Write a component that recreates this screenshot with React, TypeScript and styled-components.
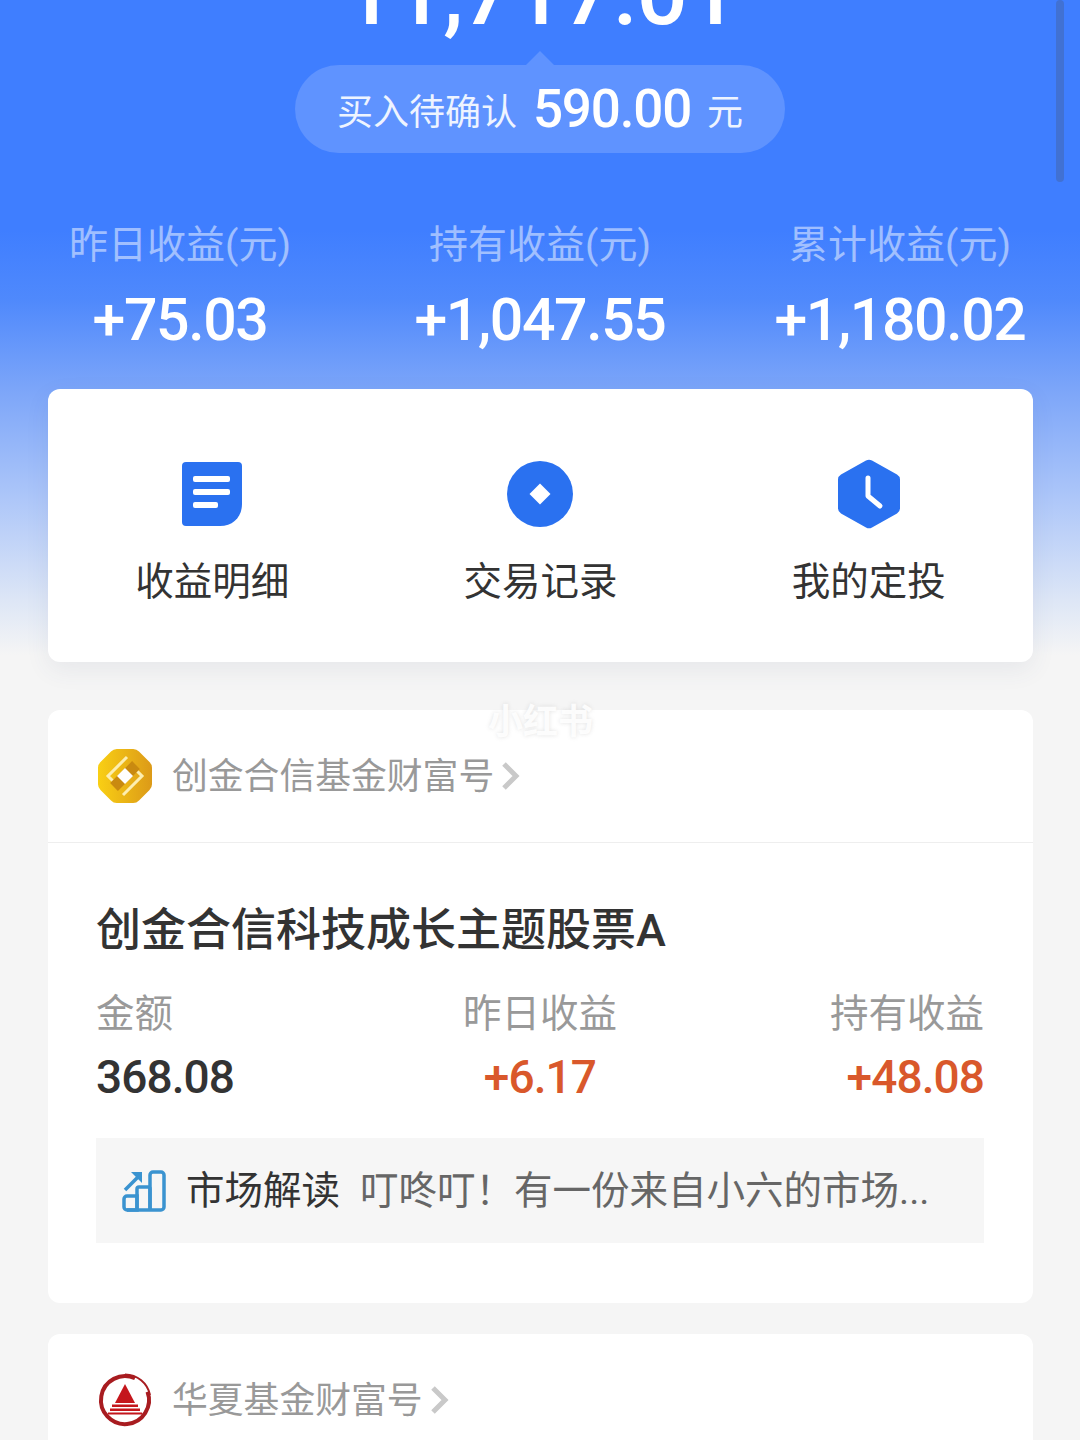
import React from "react";
import styled, { createGlobalStyle } from "styled-components";

const GlobalStyle = createGlobalStyle`
  html, body {
    margin: 0;
    padding: 0;
    background: #f5f5f5;
  }
`;

const cjk = `Roboto, "Noto Sans CJK SC", sans-serif`;

const Page = styled.div`
  position: relative;
  width: 1080px;
  height: 1440px;
  overflow: hidden;
  font-family: ${cjk};
  background: linear-gradient(
    #3f7eff 0,
    #3f7eff 230px,
    #4f89fc 300px,
    #7aa4f9 385px,
    #aec7f9 500px,
    #dde6f6 600px,
    #f5f5f5 655px
  );
`;

const Hero = styled.header`
  display: flex;
  flex-direction: column;
  align-items: center;
`;

const BigAmount = styled.div`
  margin-top: -56px;
  font-size: 90px;
  line-height: 100px;
  font-weight: 500;
  letter-spacing: -1px;
  color: #fff;
`;

const PendingBubble = styled.div`
  position: relative;
  display: flex;
  align-items: center;
  justify-content: center;
  gap: 16px;
  box-sizing: border-box;
  width: 490px;
  height: 88px;
  margin-top: 21px;
  border-radius: 44px;
  background: #5f93ff;
  color: #eef4ff;
  font-size: 36px;

  &::before {
    content: "";
    position: absolute;
    top: -14px;
    left: 231px;
    border-left: 14px solid transparent;
    border-right: 14px solid transparent;
    border-bottom: 14px solid #5f93ff;
  }
`;

const PendingAmount = styled.span`
  font-size: 53px;
  font-weight: 500;
  letter-spacing: -1.2px;
  color: #fff;
`;

const StatsRow = styled.div`
  display: grid;
  grid-template-columns: repeat(3, 360px);
  width: 100%;
  margin-top: 68px;
  text-align: center;
`;

const StatLabel = styled.div`
  font-size: 39px;
  line-height: 48px;
  color: rgba(255, 255, 255, 0.5);
`;

const StatValue = styled.div`
  margin-top: 18px;
  font-size: 59px;
  line-height: 66px;
  font-weight: 500;
  letter-spacing: -1.4px;
  color: #fff;
`;

const Card = styled.section`
  margin: 0 47px 0 48px;
  border-radius: 12px;
  background: #fff;
`;

const ActionCard = styled(Card)`
  display: grid;
  grid-template-columns: repeat(3, 1fr);
  height: 273px;
  margin-top: 36px;
  box-shadow: 0 8px 24px rgba(60, 80, 120, 0.08);
`;

const Action = styled.div`
  display: flex;
  flex-direction: column;
  align-items: center;
  padding-top: 70px;
`;

const ActionIcon = styled.div`
  display: flex;
  align-items: center;
  justify-content: center;
  height: 70px;
`;

const ActionLabel = styled.div`
  margin-top: 29px;
  font-size: 38.5px;
  line-height: 48px;
  color: #333;
`;

const FundCard = styled(Card)`
  height: 593px;
  margin-top: 48px;
`;

const OwnerRow = styled.div<{ $divided?: boolean }>`
  display: flex;
  align-items: center;
  gap: 18px;
  height: 132px;
  padding: 0 48px;
  border-bottom: ${(p) => (p.$divided ? "1px solid #eeeeee" : "none")};
`;

const OwnerName = styled.div`
  display: flex;
  align-items: center;
  gap: 7px;
  padding-bottom: 6px;
  font-size: 35.8px;
  color: #999;
`;

const ChevronGlyph = styled.svg`
  margin-top: 6px;
`;

const FundBody = styled.div`
  padding: 0 49px 0 48px;
`;

const FundTitle = styled.h2`
  margin: 60px 0 0;
  font-size: 45px;
  line-height: 56px;
  font-weight: 500;
  color: #333;
`;

const Columns = styled.div`
  display: grid;
  grid-template-columns: repeat(3, 1fr);
  margin-top: 31px;
`;

const Column = styled.div<{ $align: string }>`
  text-align: ${(p) => p.$align};
`;

const ColumnLabel = styled.div`
  font-size: 38.5px;
  line-height: 48px;
  color: #999;
`;

const ColumnValue = styled.div<{ $up?: boolean }>`
  margin-top: 13px;
  font-size: 46px;
  line-height: 52px;
  font-weight: 500;
  letter-spacing: -0.9px;
  color: ${(p) => (p.$up ? "#d9582b" : "#333")};
`;

const MarketNote = styled.div`
  display: flex;
  align-items: center;
  box-sizing: border-box;
  height: 105px;
  margin-top: 35px;
  padding: 0 0 8px 26px;
  background: #f6f6f6;
  font-size: 38.5px;
  color: #666;
  white-space: nowrap;
`;

const MarketGlyph = styled.svg`
  margin-top: 8px;
`;

const MarketTag = styled.span`
  margin: 0 20px 0 20px;
  color: #333;
`;

const OwnerCard = styled(Card)`
  height: 200px;
  margin-top: 31px;
`;

const ScrollThumb = styled.div`
  position: absolute;
  top: 0;
  right: 16px;
  width: 8px;
  height: 182px;
  border-radius: 4px;
  background: rgba(70, 90, 130, 0.35);
`;

const Watermark = styled.div`
  position: absolute;
  top: 700px;
  left: 488px;
  font-size: 35px;
  line-height: 46px;
  font-weight: 700;
  color: rgba(255, 255, 255, 0.9);
  text-shadow: 0 0 4px rgba(190, 190, 190, 0.45);
`;

const DocIcon = () => (
  <svg width="62" height="66" viewBox="0 0 62 66">
    <path d="M5 1h52a4 4 0 0 1 4 4v38c0 13-9 22-22 22H5a4 4 0 0 1-4-4V5a4 4 0 0 1 4-4z" fill="#2a71f0" />
    <rect x="12" y="15" width="37" height="6" rx="2" fill="#fff" />
    <rect x="12" y="28" width="37" height="6" rx="2" fill="#fff" />
    <rect x="12" y="41" width="25" height="6" rx="2" fill="#fff" />
  </svg>
);

const CoinIcon = () => (
  <svg width="66" height="66" viewBox="0 0 66 66">
    <circle cx="33" cy="33" r="33" fill="#2a71f0" />
    <path d="M33 22.500 43.500 33 33 43.500 22.500 33z" fill="#fff" />
  </svg>
);

const ClockIcon = () => (
  <svg width="64" height="70" viewBox="0 0 64 70">
    <path d="M29 1.500a6 6 0 0 1 6 0l25 14a6 6 0 0 1 3 5v29a6 6 0 0 1-3 5l-25 14a6 6 0 0 1-6 0l-25-14a6 6 0 0 1-3-5v-29a6 6 0 0 1 3-5z" fill="#2a71f0" />
    <path d="M31 19v18l12 10" fill="none" stroke="#fff" strokeWidth="5" strokeLinecap="round" strokeLinejoin="round" />
  </svg>
);

const GoldLogo = () => (
  <svg width="58" height="58" viewBox="0 0 58 58">
    <defs>
      <linearGradient id="gold" x1="0" y1="0" x2="1" y2="0">
        <stop offset="0" stopColor="#f9cf14" />
        <stop offset="1" stopColor="#dc9a18" />
      </linearGradient>
    </defs>
    <path d="M21 2h16a8 8 0 0 1 6 2.500L53.500 15a8 8 0 0 1 2.500 6v16a8 8 0 0 1-2.500 6L43 53.500a8 8 0 0 1-6 2.500H21a8 8 0 0 1-6-2.500L4.500 43A8 8 0 0 1 2 37V21a8 8 0 0 1 2.500-6L15 4.500A8 8 0 0 1 21 2z" fill="url(#gold)" />
    <path d="M31 10 12 29l10 10M27 48l19-19-10-10" fill="none" stroke="#fdeeb0" strokeWidth="3" />
    <path d="M18 40 40 18" stroke="#c98a10" strokeWidth="11" />
    <path d="M29 21l8 8-8 8-8-8z" fill="#fff" />
  </svg>
);

const RedLogo = () => (
  <svg width="58" height="58" viewBox="0 0 58 58">
    <g fill="none" stroke="#a81c20">
      <path d="M39 7.300A24 24 0 1 0 51.500 20.800" strokeWidth="4" />
      <path d="M29 3.500A25.500 25.500 0 0 1 54 24" strokeWidth="2" />
    </g>
    <path d="M29 13l10 19H19z" fill="#c4161c" />
    <rect x="16" y="33.500" width="26" height="2.500" fill="#c4161c" />
    <rect x="14" y="37.500" width="30" height="2.500" fill="#c4161c" />
    <rect x="12" y="41.500" width="34" height="2" fill="#c4161c" />
  </svg>
);

const Chevron = () => (
  <ChevronGlyph width="20" height="30" viewBox="0 0 20 30">
    <path d="M3 3l12 12L3 27" fill="none" stroke="#c9c9c9" strokeWidth="5" />
  </ChevronGlyph>
);

const MarketIcon = () => (
  <MarketGlyph width="44" height="42" viewBox="0 0 44 42">
    <g fill="none" stroke="#3a93d0" strokeWidth="3.500">
      <path d="M5 26h10v14H5a3 3 0 0 1-3-3v-8a3 3 0 0 1 3-3z" />
      <path d="M15 40V19a2 2 0 0 1 2-2h9a2 2 0 0 1 2 2v21" />
      <path d="M28 40V5a3 3 0 0 1 3-3h8a3 3 0 0 1 3 3v32a3 3 0 0 1-3 3H5" />
      <path d="M3 20 16 7" />
    </g>
    <path d="M9 2h11v11z" fill="#3a93d0" />
  </MarketGlyph>
);

const stats = [
  { label: "昨日收益(元)", value: "+75.03" },
  { label: "持有收益(元)", value: "+1,047.55" },
  { label: "累计收益(元)", value: "+1,180.02" },
];

const actions = [
  { label: "收益明细", icon: <DocIcon /> },
  { label: "交易记录", icon: <CoinIcon /> },
  { label: "我的定投", icon: <ClockIcon /> },
];

const columns = [
  { label: "金额", value: "368.08", align: "left", up: false },
  { label: "昨日收益", value: "+6.17", align: "center", up: true },
  { label: "持有收益", value: "+48.08", align: "right", up: true },
];

const App = () => {
  return (
    <Page>
      <GlobalStyle />
      <Hero>
        <BigAmount>11,717.01</BigAmount>
        <PendingBubble>
          <span>买入待确认</span>
          <PendingAmount>590.00</PendingAmount>
          <span>元</span>
        </PendingBubble>
        <StatsRow>
          {stats.map((s) => (
            <div key={s.label}>
              <StatLabel>{s.label}</StatLabel>
              <StatValue>{s.value}</StatValue>
            </div>
          ))}
        </StatsRow>
      </Hero>
      <ActionCard>
        {actions.map((a) => (
          <Action key={a.label}>
            <ActionIcon>{a.icon}</ActionIcon>
            <ActionLabel>{a.label}</ActionLabel>
          </Action>
        ))}
      </ActionCard>
      <FundCard>
        <OwnerRow $divided>
          <GoldLogo />
          <OwnerName>
            创金合信基金财富号
            <Chevron />
          </OwnerName>
        </OwnerRow>
        <FundBody>
          <FundTitle>创金合信科技成长主题股票A</FundTitle>
          <Columns>
            {columns.map((c) => (
              <Column key={c.label} $align={c.align}>
                <ColumnLabel>{c.label}</ColumnLabel>
                <ColumnValue $up={c.up}>{c.value}</ColumnValue>
              </Column>
            ))}
          </Columns>
          <MarketNote>
            <MarketIcon />
            <MarketTag>市场解读</MarketTag>
            叮咚叮！有一份来自小六的市场...
          </MarketNote>
        </FundBody>
      </FundCard>
      <OwnerCard>
        <OwnerRow>
          <RedLogo />
          <OwnerName>
            华夏基金财富号
            <Chevron />
          </OwnerName>
        </OwnerRow>
      </OwnerCard>
      <ScrollThumb />
      <Watermark>小红书</Watermark>
    </Page>
  );
};

export default App;
